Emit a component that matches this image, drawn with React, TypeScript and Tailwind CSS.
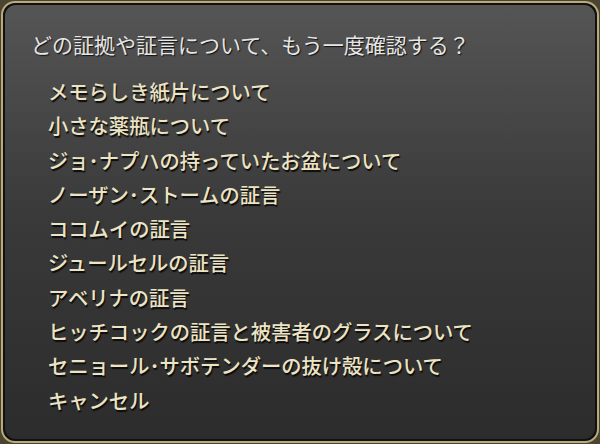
import React from "react";

const choices = [
  "メモらしき紙片について",
  "小さな薬瓶について",
  "ジョ･ナプハの持っていたお盆について",
  "ノーザン･ストームの証言",
  "ココムイの証言",
  "ジュールセルの証言",
  "アベリナの証言",
  "ヒッチコックの証言と被害者のグラスについて",
  "セニョール･サボテンダーの抜け殻について",
  "キャンセル",
];

export default function App() {
  return (
    <div
      className="w-[600px] h-[444px] bg-[#4a4431] p-[1px]"
      style={{ fontFamily: '"Noto Sans CJK JP", "Noto Sans", sans-serif' }}
    >
      <div className="h-full rounded-[14px] border-[2px] border-[#b9ab7c] bg-[#111] p-[2px]">
        <div className="h-full rounded-[11px] bg-gradient-to-b from-[#555555] via-[#393939] to-[#2c2c2c] pl-[26px] pt-[24px]">
          <div className="text-[21px] leading-[30px] text-[#e6e6e6] [text-shadow:1px_1px_1px_#111]">
            どの証拠や証言について、もう一度確認する？
          </div>
          <ul className="mt-[15px] pl-[17px] flex flex-col">
            {choices.map((c) => (
              <li
                key={c}
                className="text-[20.3px] font-medium leading-[34.3px] text-[#ece4c4] [text-shadow:1px_2px_1px_#0c0c0c]"
              >
                {c}
              </li>
            ))}
          </ul>
        </div>
      </div>
    </div>
  );
}
